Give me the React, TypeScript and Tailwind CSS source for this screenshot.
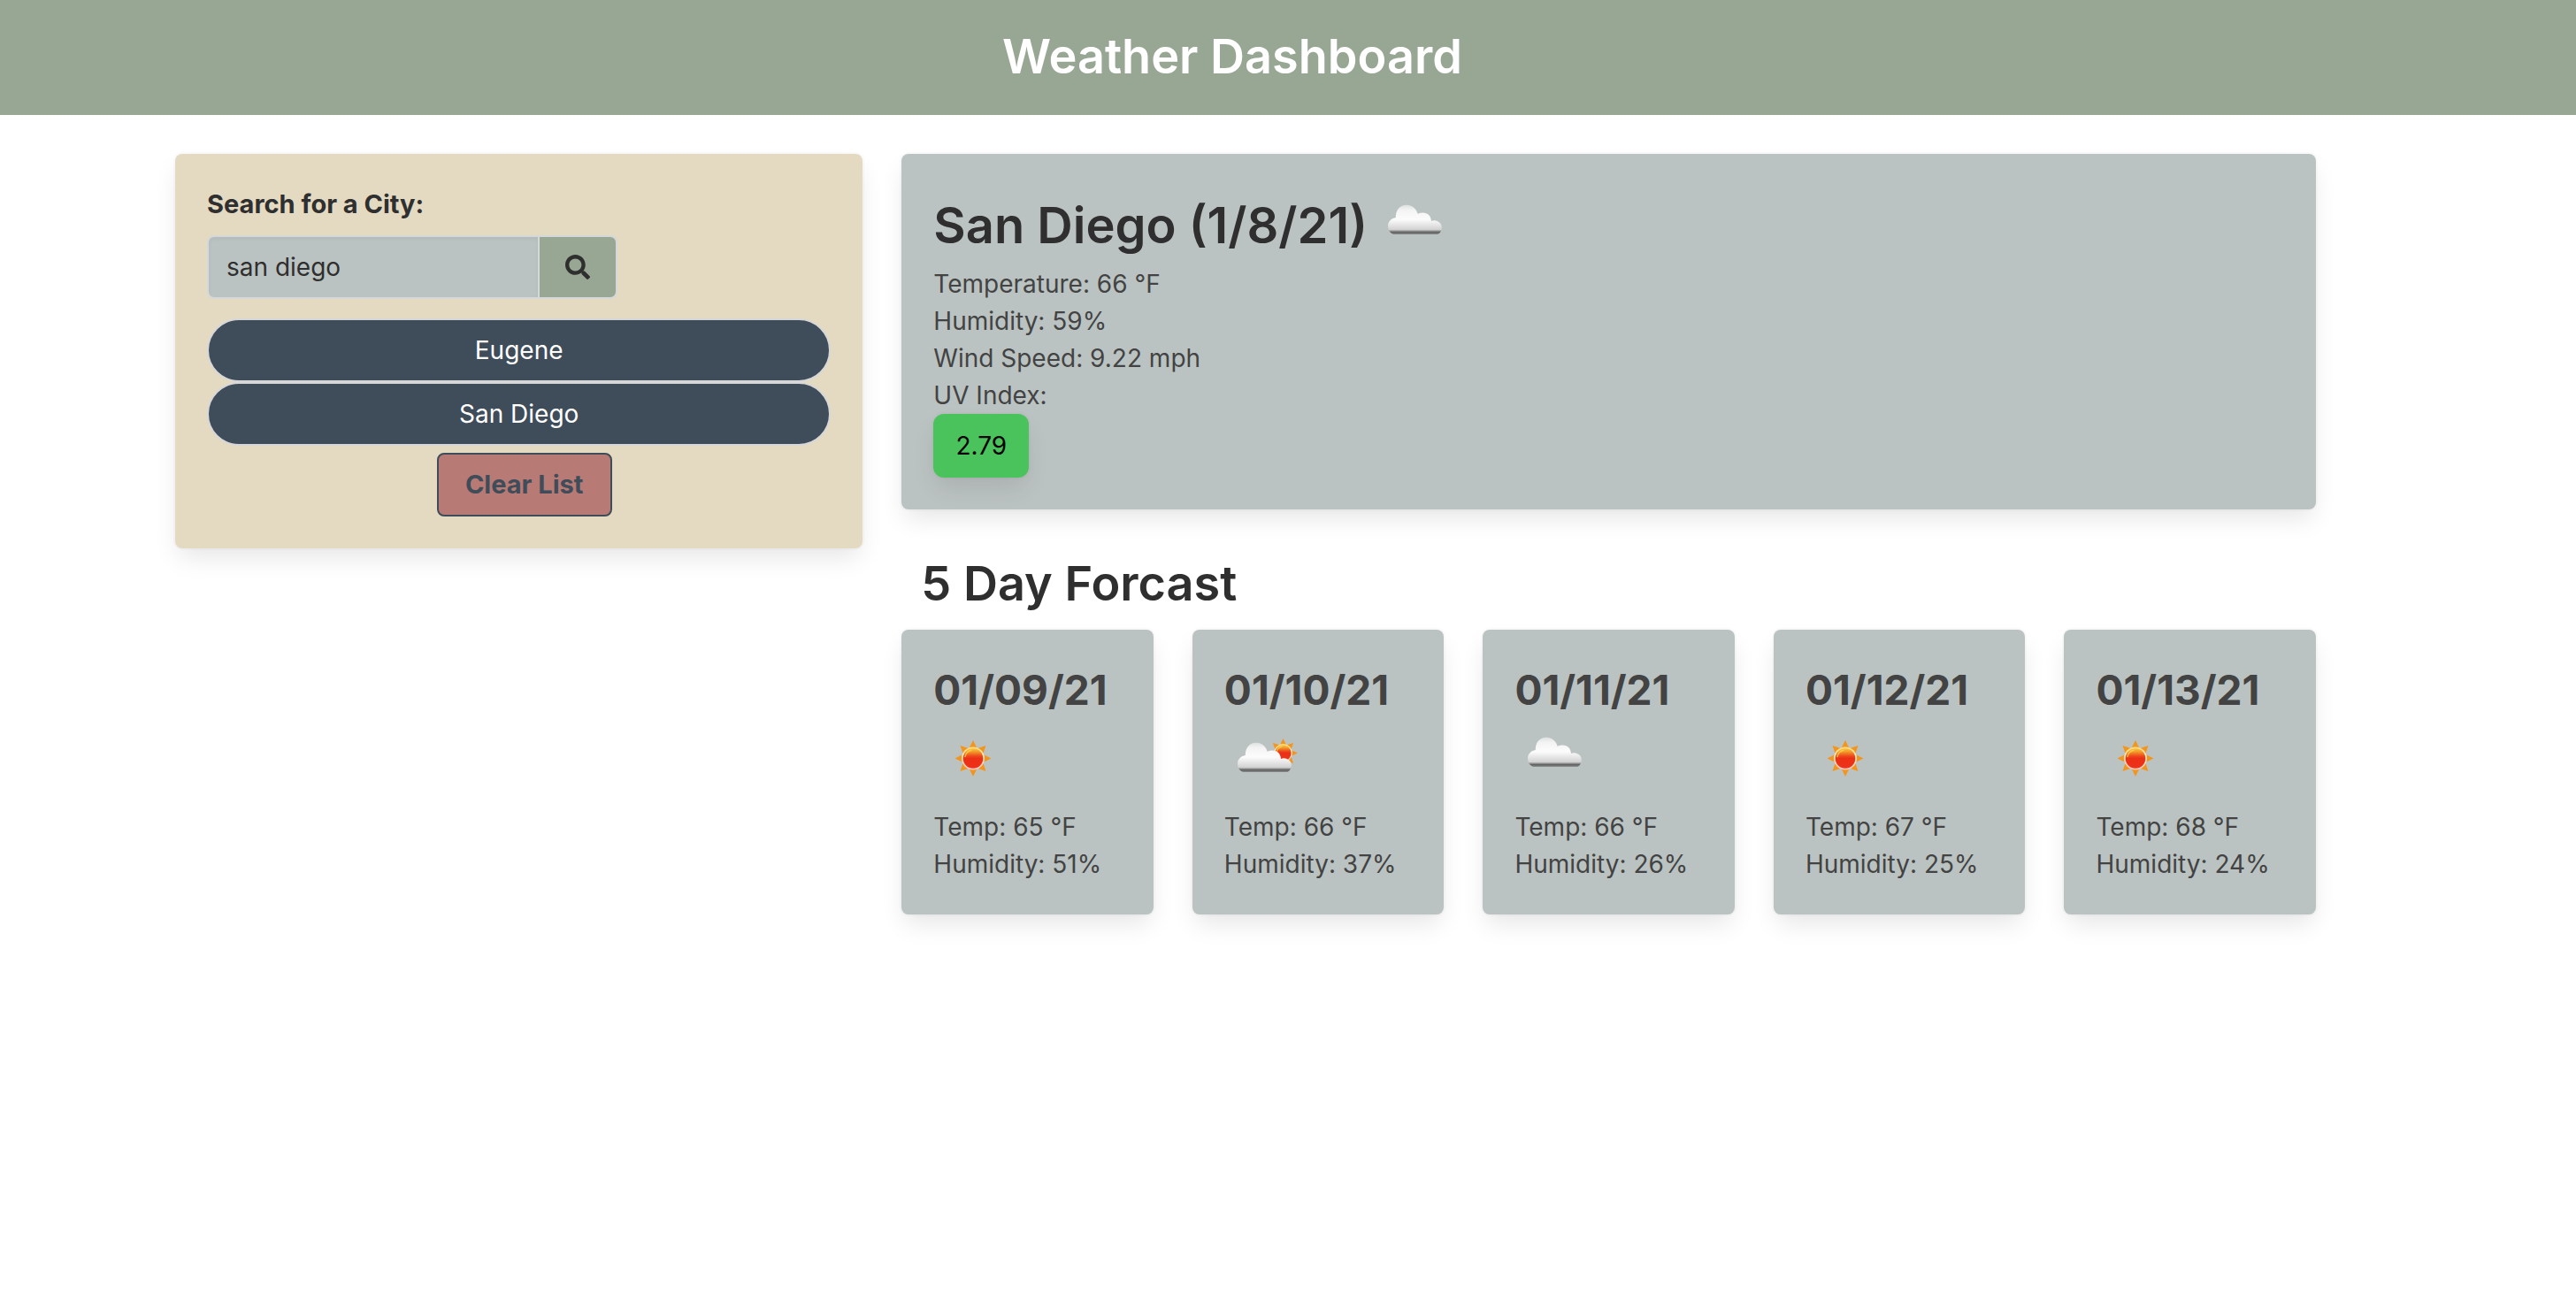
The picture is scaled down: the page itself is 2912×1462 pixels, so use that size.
import { useId, useState } from "react";
import { FaSearch } from "react-icons/fa";

type Condition = "sun" | "cloud" | "partly";

const days: { date: string; sky: Condition; temp: number; humidity: number }[] = [
  { date: "01/09/21", sky: "sun", temp: 65, humidity: 51 },
  { date: "01/10/21", sky: "partly", temp: 66, humidity: 37 },
  { date: "01/11/21", sky: "cloud", temp: 66, humidity: 26 },
  { date: "01/12/21", sky: "sun", temp: 67, humidity: 25 },
  { date: "01/13/21", sky: "sun", temp: 68, humidity: 24 },
];

const cardShadow = "shadow-[0_14px_28px_-4px_rgba(10,10,10,0.1),0_0_0_2px_rgba(10,10,10,0.02)]";

function Sun({ id, transform }: { id: string; transform: string }) {
  return (
    <g transform={transform}>
      {[0, 45, 90, 135, 180, 225, 270, 315].map((a) => (
        <path key={a} d="M-4.2 -12 L0 -20.5 L4.2 -12 Z" fill="#f2951f" transform={`rotate(${a})`} />
      ))}
      <circle r="13" fill={`url(#${id}-ring)`} />
      <circle r="11.3" fill={`url(#${id}-disc)`} />
      <path d="M-9 -2 A9.4 9.4 0 0 1 -2 -9.2" fill="none" stroke="#ffd84a" strokeWidth="1.4" strokeLinecap="round" opacity="0.8" />
    </g>
  );
}

function Cloud({ id, transform }: { id: string; transform?: string }) {
  const shape =
    "M21 55 C17.5 53.500 15 50 15 45.500 C15 40.500 19 36.800 23.800 36 C23.600 27.500 28.500 21.700 36 21.700 C42 21.700 47 25.500 48.600 31.800 C50.500 31 52.500 30.600 54.500 30.600 C60 30.600 63.500 34 64 40 C65.500 39.400 67 39.200 68.500 39.400 C72.800 40 75.800 43 75.800 47 C75.800 50.500 74.500 53 71.500 55 Z";
  return <path d={shape} fill={`url(#${id}-cloud)`} transform={transform} />;
}

function WeatherIcon({ sky, label }: { sky: Condition; label: string }) {
  const id = useId();
  return (
    <svg viewBox="0 0 90 90" className="size-[90px] shrink-0" role="img" aria-label={label}>
      <defs>
        <linearGradient id={`${id}-cloud`} x1="0" y1="21" x2="0" y2="55" gradientUnits="userSpaceOnUse">
          <stop offset="0" stopColor="#dcdfdf" />
          <stop offset="0.2" stopColor="#f4f4f4" />
          <stop offset="0.5" stopColor="#fcfcfc" />
          <stop offset="0.84" stopColor="#d2d2d2" />
          <stop offset="0.88" stopColor="#a0a0a0" />
          <stop offset="0.93" stopColor="#606060" />
          <stop offset="1" stopColor="#8a8d8d" />
        </linearGradient>
        <linearGradient id={`${id}-ring`} x1="0" y1="0" x2="0" y2="1">
          <stop offset="0" stopColor="#fbd77c" />
          <stop offset="0.4" stopColor="#fdecc8" />
          <stop offset="1" stopColor="#fbc3bb" />
        </linearGradient>
        <linearGradient id={`${id}-disc`} x1="0" y1="0" x2="0" y2="1">
          <stop offset="0" stopColor="#f9c840" />
          <stop offset="0.18" stopColor="#f3962a" />
          <stop offset="0.38" stopColor="#ee4a1c" />
          <stop offset="0.5" stopColor="#eb3016" />
          <stop offset="1" stopColor="#ec3218" />
        </linearGradient>
      </defs>
      {sky === "sun" && <Sun id={id} transform="translate(45 45.500)" />}
      {sky === "partly" && <Sun id={id} transform="translate(66.500 39.500) scale(0.800)" />}
      {sky === "partly" && <Cloud id={id} transform="translate(0 6)" />}
      {sky === "cloud" && <Cloud id={id} />}
    </svg>
  );
}

export default function App() {
  const [query, setQuery] = useState("san diego");
  return (
    <div className="min-h-screen bg-white font-[Inter,sans-serif] text-[28px] leading-[42px] text-[#434343]">
      <header className="bg-[#98a794] pt-8 pr-[126px] pb-[34px]">
        <h1 className="text-center text-[54px] leading-[64px] font-semibold text-white">Weather Dashboard</h1>
      </header>
      <main className="flex items-start pt-11 pr-[272px] pl-[176px]">
        <aside className="w-1/3 px-[22px]">
          <div className={`flex flex-col rounded-lg bg-[#e4dac2] p-9 ${cardShadow}`}>
            <label htmlFor="city" className="text-[29px] font-bold text-[#2f2f2f]">
              Search for a City:
            </label>
            <form className="mt-3.5 flex" onSubmit={(e) => e.preventDefault()}>
              <input
                id="city"
                type="text"
                value={query}
                onChange={(e) => setQuery(e.target.value)}
                className="h-[72px] w-[376px] rounded-l-lg border-2 border-[#d5d8d8] bg-[#bbc3c2] px-5 text-[#2f2f2f] shadow-[inset_0_2px_4px_rgba(10,10,10,0.05)] outline-none"
              />
              <button
                type="submit"
                aria-label="Search"
                className="-ml-0.5 flex h-[72px] w-[90px] items-center justify-center rounded-r-lg border-2 border-[#d5d8d8] bg-[#98a794] text-[#2f2f2f]"
              >
                <FaSearch />
              </button>
            </form>
            <div className="mt-[22px] flex flex-col">
              {["Eugene", "San Diego"].map((city) => (
                <button
                  key={city}
                  type="button"
                  className="h-[72px] rounded-full border-2 border-[#d7d7da] bg-[#3f4c59] text-white"
                >
                  {city}
                </button>
              ))}
            </div>
            <div className="mt-2 flex justify-center pl-3">
              <button
                type="button"
                className="h-[72px] w-[198px] rounded-lg border-2 border-[#3f4c59] bg-[#b87a74] text-[29px] font-bold text-[#3f4c59]"
              >
                Clear List
              </button>
            </div>
          </div>
        </aside>
        <div className="w-2/3 px-[22px]">
          <section className={`rounded-lg bg-[#bbc3c2] p-9 ${cardShadow}`}>
            <div className="flex items-center gap-2">
              <h2 className="text-[56px] leading-[90px] font-semibold text-[#2f2f2f]">San Diego (1/8/21)</h2>
              <WeatherIcon sky="cloud" label="Cloudy" />
            </div>
            <p>Temperature: 66 °F</p>
            <p>Humidity: 59%</p>
            <p>Wind Speed: 9.22 mph</p>
            <p>UV Index:</p>
            <div className="flex h-[72px] w-[108px] items-center justify-center rounded-xl bg-[#4bc35c] text-black shadow-[0_14px_28px_-4px_rgba(10,10,10,0.1),0_0_0_2px_rgba(10,10,10,0.02)]">
              2.79
            </div>
          </section>
          <h2 className="mt-[52px] mb-5 pl-[22px] text-[54px] leading-[64px] font-semibold text-[#2f2f2f]">
            5 Day Forcast
          </h2>
          <div className="grid grid-cols-5 gap-11">
            {days.map((d) => (
              <article key={d.date} className={`rounded-lg bg-[#bbc3c2] p-9 ${cardShadow}`}>
                <h3 className="text-[46px] leading-[64px] font-bold">{d.date}</h3>
                <WeatherIcon sky={d.sky} label={d.sky} />
                <p className="mt-3 whitespace-nowrap">Temp: {d.temp} °F</p>
                <p className="whitespace-nowrap">Humidity: {d.humidity}%</p>
              </article>
            ))}
          </div>
        </div>
      </main>
    </div>
  );
}
